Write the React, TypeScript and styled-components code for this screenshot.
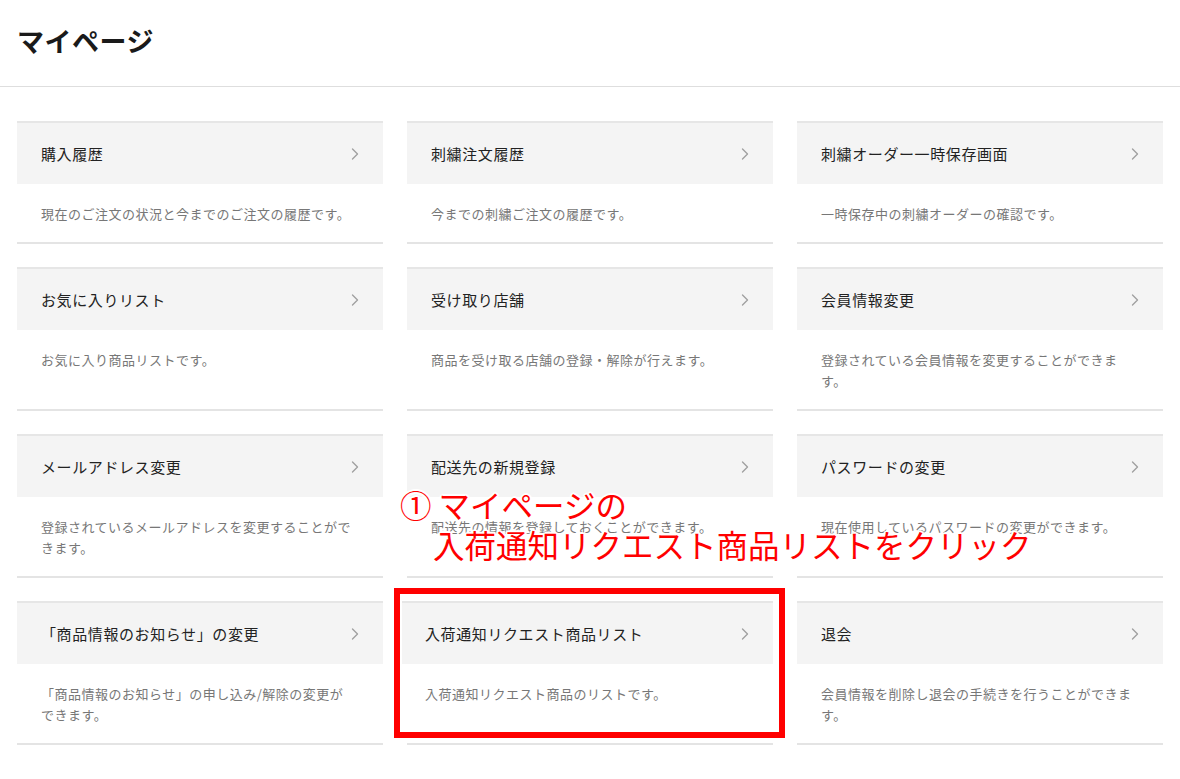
import React from "react";
import styled, { createGlobalStyle } from "styled-components";

interface MenuItem {
  title: string;
  description: string;
  highlighted?: boolean;
}

const items: MenuItem[] = [
  { title: "購入履歴", description: "現在のご注文の状況と今までのご注文の履歴です。" },
  { title: "刺繍注文履歴", description: "今までの刺繍ご注文の履歴です。" },
  { title: "刺繍オーダー一時保存画面", description: "一時保存中の刺繍オーダーの確認です。" },
  { title: "お気に入りリスト", description: "お気に入り商品リストです。" },
  { title: "受け取り店舗", description: "商品を受け取る店舗の登録・解除が行えます。" },
  { title: "会員情報変更", description: "登録されている会員情報を変更することができます。" },
  { title: "メールアドレス変更", description: "登録されているメールアドレスを変更することができます。" },
  { title: "配送先の新規登録", description: "配送先の情報を登録しておくことができます。" },
  { title: "パスワードの変更", description: "現在使用しているパスワードの変更ができます。" },
  {
    title: "「商品情報のお知らせ」の変更",
    description: "「商品情報のお知らせ」の申し込み/解除の変更ができます。",
  },
  {
    title: "入荷通知リクエスト商品リスト",
    description: "入荷通知リクエスト商品のリストです。",
    highlighted: true,
  },
  { title: "退会", description: "会員情報を削除し退会の手続きを行うことができます。" },
];

const GlobalStyle = createGlobalStyle`
  html, body {
    margin: 0;
    padding: 0;
    background: #fff;
  }
  body {
    font-family: "Noto Sans CJK JP", "Noto Sans", sans-serif;
    color: #222;
  }
`;

const Page = styled.div`
  width: 1180px;
`;

const Header = styled.header`
  height: 87px;
  box-sizing: border-box;
  border-bottom: 1px solid #dedede;
  display: flex;
  align-items: center;
  padding: 0 0 6px 17px;
`;

const PageTitle = styled.h1`
  margin: 0;
  font-size: 27px;
  font-weight: 700;
  color: #1a1a1a;
  letter-spacing: 0.5px;
`;

const Grid = styled.div`
  position: relative;
  display: grid;
  grid-template-columns: repeat(3, 1fr);
  column-gap: 24px;
  row-gap: 23px;
  padding: 34px 17px 0;
`;

const Card = styled.a`
  position: relative;
  display: flex;
  flex-direction: column;
  border-bottom: 2px solid #e4e4e4;
  text-decoration: none;
  cursor: pointer;
`;

/* the highlighted card sits a few pixels left in the capture */
const CardHead = styled.div<{ $shift?: boolean }>`
  height: 61px;
  border-top: 2px solid #e6e6e6;
  background: #f4f4f4;
  display: flex;
  align-items: center;
  justify-content: space-between;
  margin-left: ${({ $shift }) => ($shift ? "-5px" : "0")};
  padding: 0 24px 0 ${({ $shift }) => ($shift ? "23px" : "24px")};
`;

const CardTitle = styled.span`
  font-size: 15px;
  letter-spacing: 0.6px;
  color: #222;
`;

const Chevron = styled.svg`
  width: 8px;
  height: 12px;
  flex-shrink: 0;
`;

const CardText = styled.p<{ $shift?: boolean }>`
  margin: 0;
  padding: 19px 30px 18px ${({ $shift }) => ($shift ? "18px" : "24px")};
  font-size: 13px;
  line-height: 21px;
  letter-spacing: 0.5px;
  color: #777;
`;

const Highlight = styled.div`
  position: absolute;
  top: -13px;
  left: -13px;
  right: -12px;
  bottom: 5px;
  border: 6px solid #ff0000;
  pointer-events: none;
`;

const Callout = styled.div`
  position: absolute;
  left: 400px;
  top: 397px;
  font-size: 31.5px;
  line-height: 40px;
  color: #ff0000;
  white-space: nowrap;
  pointer-events: none;
  text-shadow: -2px 0 #fff, 2px 0 #fff, 0 -2px #fff, 0 2px #fff,
    -1.5px -1.5px #fff, 1.5px -1.5px #fff, -1.5px 1.5px #fff, 1.5px 1.5px #fff;
`;

const CalloutLine = styled.div<{ $indent?: number }>`
  padding-left: ${({ $indent }) => $indent ?? 0}px;
`;

function ChevronIcon() {
  return (
    <Chevron viewBox="0 0 8 12" fill="none">
      <polyline
        points="1.5,1 6.5,6 1.5,11"
        stroke="#a0a0a0"
        strokeWidth="1.4"
        strokeLinecap="round"
        strokeLinejoin="round"
      />
    </Chevron>
  );
}

export default function App(): React.JSX.Element {
  return (
    <Page>
      <GlobalStyle />
      <Header>
        <PageTitle>マイページ</PageTitle>
      </Header>
      <Grid>
        {items.map((item) => (
          <Card key={item.title}>
            <CardHead $shift={item.highlighted}>
              <CardTitle>{item.title}</CardTitle>
              <ChevronIcon />
            </CardHead>
            <CardText $shift={item.highlighted}>{item.description}</CardText>
            {item.highlighted && <Highlight />}
          </Card>
        ))}
        <Callout>
          <CalloutLine>① マイページの</CalloutLine>
          <CalloutLine $indent={33}>入荷通知リクエスト商品リストをクリック</CalloutLine>
        </Callout>
      </Grid>
    </Page>
  );
}
